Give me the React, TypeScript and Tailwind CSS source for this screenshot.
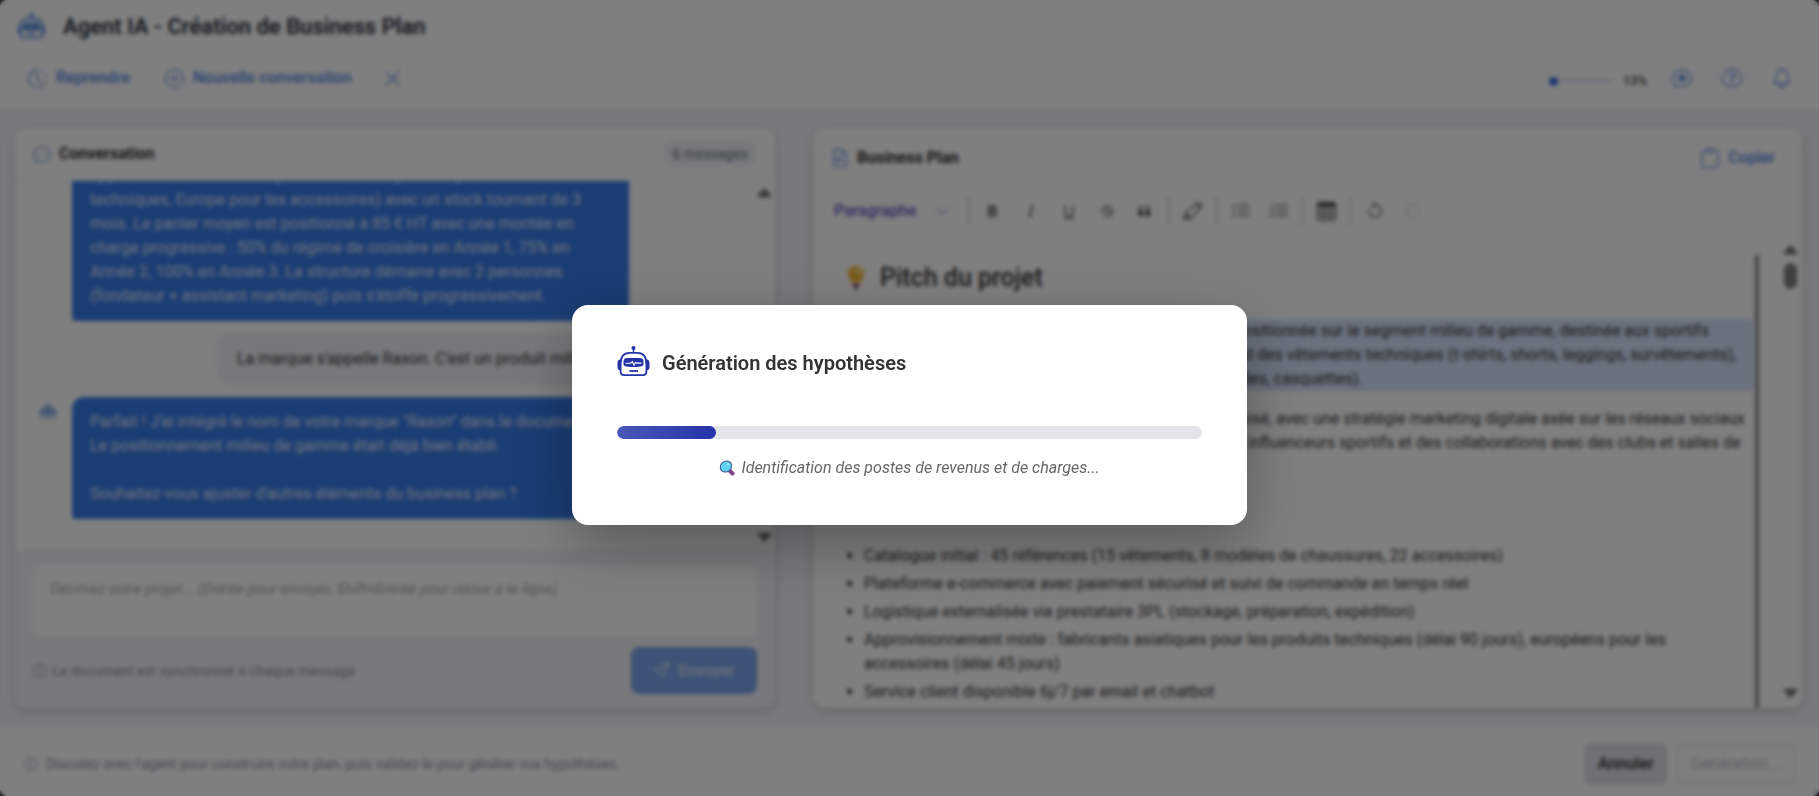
import React from "react";
import {
  BsClockHistory,
  BsPlusCircle,
  BsXLg,
  BsChatDots,
  BsChatHeart,
  BsQuestionCircle,
  BsBell,
  BsFileEarmarkText,
  BsClipboard,
  BsInfoCircle,
  BsSend,
  BsTypeBold,
  BsTypeItalic,
  BsTypeUnderline,
  BsTypeStrikethrough,
  BsQuote,
  BsHighlighter,
  BsListUl,
  BsListOl,
  BsTable,
  BsArrowCounterclockwise,
  BsArrowClockwise,
  BsChevronDown,
  BsRobot,
  BsCaretUpFill,
  BsCaretDownFill,
} from "react-icons/bs";

const PROGRESS = 17;

const RobotIcon = () => (
  <svg width="33" height="32" viewBox="0 0 33 32" fill="none" aria-hidden="true">
    <circle cx="16.5" cy="3" r="2.1" fill="#2533a8" />
    <path d="M16.5 4v4" stroke="#2533a8" strokeWidth="1.4" />
    <path
      d="M3.6 19C3.600 11.500 7 7.900 12.500 7.900h8c5.500 0 8.900 3.600 8.900 11.100v7.500c0 2.200-1.400 3.600-3.600 3.600H7.200c-2.200 0-3.600-1.400-3.600-3.600Z"
      stroke="#2533a8"
      strokeWidth="1.800"
    />
    <path d="M3.400 14.500v10.800C1.500 25.300 0.500 24 0.500 22v-4c0-2 1-3.500 2.900-3.500ZM29.600 14.500v10.800c1.900 0 2.900-1.300 2.900-3.300v-4c0-2-1-3.500-2.900-3.500Z" fill="#2533a8" />
    <path d="M6.500 16.500c0-2.500 1.500-3.500 4-3.500h12c2.500 0 4 1 4 3.500V19c0 2-1.500 3-10 3s-10-1-10-3Z" fill="#2533a8" />
    <path d="M8.500 18.300h5l2-1.600 1.500 3.400 1.700-2.600 1.300.6h4.500" stroke="#fff" strokeWidth="1.100" />
    <path d="M12.500 26h8.500" stroke="#2533a8" strokeWidth="1.800" />
  </svg>
);

const BulbIcon = () => (
  <svg width="18" height="26" viewBox="0 0 18 26" aria-hidden="true">
    <path d="M9 1c4.600 0 8 3.400 8 7.800 0 4.600-3.800 6-4.600 9.700H5.600C4.800 14.800 1 13.400 1 8.800 1 4.400 4.400 1 9 1Z" fill="#f5b52e" />
    <ellipse cx="11.500" cy="6" rx="3" ry="3.500" fill="#fde08a" />
    <path d="M6 18.500h6v3.500L9 25.500 6 22Z" fill="#8f5f86" />
  </svg>
);

const LensIcon = () => (
  <svg width="16" height="16" viewBox="0 0 16 16" aria-hidden="true">
    <path d="m10.500 10.500 3 3" stroke="#84458a" strokeWidth="4" strokeLinecap="round" />
    <ellipse cx="7" cy="6.500" rx="6" ry="5.300" transform="rotate(-40 7 6.500)" fill="#5fd0ee" stroke="#3f4f8c" strokeWidth="1" />
    <ellipse cx="9" cy="4.200" rx="1.500" ry="1" fill="#9be6f7" />
  </svg>
);

const toolbar = [
  [
    { label: "Gras", Icon: BsTypeBold, size: 18 },
    { label: "Italique", Icon: BsTypeItalic, size: 18 },
    { label: "Souligné", Icon: BsTypeUnderline, size: 18 },
    { label: "Barré", Icon: BsTypeStrikethrough, size: 18 },
    { label: "Citation", Icon: BsQuote, size: 19 },
  ],
  [{ label: "Surligner", Icon: BsHighlighter, size: 19 }],
  [
    { label: "Liste à puces", Icon: BsListUl, size: 20 },
    { label: "Liste numérotée", Icon: BsListOl, size: 20 },
  ],
  [{ label: "Tableau", Icon: BsTable, size: 19 }],
];

const points = [
  "Catalogue initial : 45 références (15 vêtements, 8 modèles de chaussures, 22 accessoires)",
  "Plateforme e-commerce avec paiement sécurisé et suivi de commande en temps réel",
  "Logistique externalisée via prestataire 3PL (stockage, préparation, expédition)",
  "Approvisionnement mixte : fabricants asiatiques pour les produits techniques (délai 90 jours), européens pour les accessoires (délai 45 jours)",
  "Service client disponible 6j/7 par email et chatbot",
];

const Header = () => (
  <header className="h-[108px] shrink-0 bg-white pr-5 pl-[18px]">
    <div className="flex h-[52px] items-center gap-[18px]">
      <BsRobot size={27} className="text-[#3b74d9]" />
      <h1 className="text-[22px] font-semibold text-[#212b36]">Agent IA - Création de Business Plan</h1>
    </div>
    <div className="flex h-[52px] items-center justify-between">
      <div className="flex items-center gap-[15px] text-base font-medium text-[#4f82e2]">
        <button className="flex h-[36px] items-center gap-[9px] rounded-md border border-[#e6edf9] px-[9px]">
          <BsClockHistory size={19} />
          Reprendre
        </button>
        <button className="flex h-[36px] items-center gap-[9px] rounded-md border border-[#e6edf9] px-[9px]">
          <BsPlusCircle size={19} />
          Nouvelle conversation
        </button>
        <button aria-label="Fermer" className="flex h-[36px] w-8 items-center justify-center rounded-md border border-[#e6edf9]">
          <BsXLg size={19} />
        </button>
      </div>
      <div className="flex items-center gap-4 text-[#4f82e2]">
        <div className="mr-0.5 flex items-center gap-2 pt-1.5">
          <div className="flex h-1 w-[66px] items-center rounded bg-[#e3e9f2]">
            <div className="size-[9px] rounded-full bg-[#2f6fe0]" />
          </div>
          <span className="text-[13px] font-medium text-[#333]">13%</span>
        </div>
        <button aria-label="Avis" className="flex size-[34px] items-center justify-center rounded-md border border-[#e6edf9]">
          <BsChatHeart size={20} />
        </button>
        <button aria-label="Aide" className="flex size-[34px] items-center justify-center rounded-md border border-[#e6edf9]">
          <BsQuestionCircle size={20} />
        </button>
        <button aria-label="Notifications" className="flex size-[34px] items-center justify-center rounded-md border border-[#e6edf9]">
          <BsBell size={20} />
        </button>
      </div>
    </div>
  </header>
);

const Conversation = () => (
  <section className="flex min-h-0 flex-col overflow-hidden rounded-xl bg-white shadow-[0_3px_10px_rgba(0,0,0,0.18)]">
    <div className="flex h-[53px] shrink-0 items-center justify-between border-b border-[#eceef1] pr-5 pl-[18px]">
      <h2 className="flex items-center gap-2 text-base font-bold text-[#2d2d2d]">
        <BsChatDots size={18} className="text-[#6b96e0]" />
        Conversation
      </h2>
      <span className="rounded-md bg-[#edf1f6] px-[7px] text-sm leading-6 font-medium text-[#7b8c9c]">6 messages</span>
    </div>
    <div className="flex min-h-0 flex-1">
      <div className="flex min-w-0 flex-1 flex-col justify-end gap-3 overflow-hidden pr-4 pb-[30px] pl-[18px] text-base leading-6">
        <div className="ml-[39px] w-[557px] rounded-xl rounded-bl bg-[#347ae8] px-[18px] py-[13px] text-[#e4ecfa]">
          approvisionnement mixte (fabrication Asie pour les produits<br />
          techniques, Europe pour les accessoires) avec un stock tournant de 3<br />
          mois. Le panier moyen est positionné à 85 € HT avec une montée en<br />
          charge progressive : 50% du régime de croisière en Année 1, 75% en<br />
          Année 2, 100% en Année 3. La structure démarre avec 2 personnes<br />
          (fondateur + assistant marketing) puis s'étoffe progressivement.
        </div>
        <div className="w-[520px] self-end rounded-xl bg-[#eef1f5] px-5 py-[14px] text-[#333]">
          La marque s'appelle Raxon. C'est un produit milieu de gamme.
        </div>
        <div className="flex items-start">
          <BsRobot size={16} className="mt-[6px] mr-[16px] ml-[7px] shrink-0 text-[#3b74d9]" />
          <div className="w-[557px] rounded-xl rounded-bl bg-[#347ae8] px-[18px] py-[13px] text-[#e4ecfa]">
            Parfait ! J'ai intégré le nom de votre marque "Raxon" dans le document.<br />
            Le positionnement milieu de gamme était déjà bien établi.<br />
            <br />
            Souhaitez-vous ajuster d'autres éléments du business plan ?
          </div>
        </div>
      </div>
      <div className="flex w-[22px] flex-col items-center justify-between py-0.5 text-[#707070]">
        <BsCaretUpFill size={19} />
        <BsCaretDownFill size={19} />
      </div>
    </div>
    <div className="shrink-0 bg-[#f1f3f6] px-[18px] pt-[17px] pb-[14px]">
      <textarea
        aria-label="Votre message"
        placeholder="Décrivez votre projet... (Entrée pour envoyer, Shift+Entrée pour retour à la ligne)"
        className="block h-[69px] w-full resize-none rounded-md bg-white px-[17px] py-[11px] text-[15px] leading-6 placeholder:text-[#a8a8a8] placeholder:italic"
      />
      <div className="mt-3 flex items-center justify-between">
        <p className="flex items-center gap-[5px] text-sm text-[#8795a3]">
          <BsInfoCircle size={14} />
          Le document est synchronisé à chaque message
        </p>
        <button className="flex h-[47px] items-center gap-2 rounded-lg bg-[#7ba4ec] px-[22px] text-base font-medium text-[#dbe7fb]">
          <BsSend size={17} />
          Envoyer
        </button>
      </div>
    </div>
  </section>
);

const BusinessPlan = () => (
  <section className="flex min-h-0 flex-col overflow-hidden rounded-xl bg-white shadow-[0_3px_10px_rgba(0,0,0,0.18)]">
    <div className="flex h-[60px] shrink-0 items-center justify-between border-b border-[#eceef1] pr-[18px] pl-[18px]">
      <h2 className="flex items-center gap-2 text-base font-bold text-[#2d2d2d]">
        <BsFileEarmarkText size={18} className="text-[#4a86ea]" />
        Business Plan
      </h2>
      <button className="flex h-[34px] items-center gap-2 rounded-md border border-[#e6edf9] px-2 text-base font-medium text-[#4f82e2]">
        <BsClipboard size={20} />
        Copier
      </button>
    </div>
    <div className="flex h-[47px] shrink-0 items-center gap-[9px] border-b border-[#eceef1] px-3 text-[#444]">
      <button className="flex h-8 w-[134px] items-center justify-between rounded-md border border-[#ecf0f8] px-2 text-base font-medium text-[#5a58c0]">
        Paragraphe
        <BsChevronDown size={15} className="text-[#6c94e0]" />
      </button>
      <span className="h-7 w-px bg-[#a8b2c4]" />
      {toolbar.map((group, i) => (
        <React.Fragment key={i}>
          {group.map(({ label, Icon, size }) => (
            <button key={label} aria-label={label} className="flex size-[29px] items-center justify-center">
              <Icon size={size} />
            </button>
          ))}
          <span className="h-7 w-px bg-[#a8b2c4]" />
        </React.Fragment>
      ))}
      <button aria-label="Annuler la frappe" className="flex size-[29px] items-center justify-center">
        <BsArrowCounterclockwise size={18} />
      </button>
      <button aria-label="Rétablir" className="flex size-[29px] items-center justify-center text-[#d4d7db]">
        <BsArrowClockwise size={18} />
      </button>
    </div>
    <div className="flex min-h-0 flex-1">
      <div className="mt-5 ml-[34px] min-w-0 flex-1 overflow-hidden border-r-4 border-[#8a8a8a] pr-0.5 text-base leading-6 text-[#333]">
        <h3 className="mb-[18px] flex items-center gap-[15px] text-[25px] leading-[46px] font-medium">
          <BulbIcon />
          Pitch du projet
        </h3>
        <p className="mb-4 rounded bg-[#d5e4fb]">
          Raxon est une marque e-commerce d'articles de sport positionnée sur le segment milieu de gamme, destinée aux sportifs<br />
          amateurs et passionnés confirmés. La gamme comprend des vêtements techniques (t-shirts, shorts, leggings, survêtements),<br />
          des chaussures et des accessoires (sacs de sport, gourdes, casquettes).
        </p>
        <p>
          Le site propose un parcours client ergonomique et optimisé, avec une stratégie marketing digitale axée sur les réseaux sociaux<br />
          (Instagram, TikTok, YouTube), des partenariats avec des influenceurs sportifs et des collaborations avec des clubs et salles de<br />
          sport.
        </p>
        <h3 className="mt-3 mb-[17px] text-xl leading-9 font-medium">Offre et organisation</h3>
        <ul className="list-disc pl-[17px]">
          {points.map((p) => (
            <li key={p} className="mb-1">{p}</li>
          ))}
        </ul>
      </div>
      <div className="mr-px ml-5 flex w-[22px] flex-col items-center py-[5px] text-[#707070]">
        <BsCaretUpFill size={19} />
        <span className="mt-1 h-[26px] w-[13px] rounded-full bg-[#808080]" />
        <BsCaretDownFill size={19} className="mt-auto" />
      </div>
    </div>
  </section>
);

const Footer = () => (
  <footer className="flex h-[69px] shrink-0 items-center justify-between bg-white px-6 pt-1">
    <p className="flex items-center gap-2 text-sm text-[#8795a3]">
      <BsInfoCircle size={14} />
      Discutez avec l'agent pour construire votre plan, puis validez-le pour générer vos hypothèses.
    </p>
    <div className="flex gap-[10px]">
      <button className="h-10 rounded-md border border-[#cdd2da] bg-[#dde1e8] px-3 text-base font-semibold text-[#333]">Annuler</button>
      <button className="h-10 rounded-md border border-[#cfd2d6] px-[13px] text-base text-[#b8bcc2]">Génération...</button>
    </div>
  </footer>
);

const GenerationDialog = () => (
  <div className="fixed inset-0 flex items-center justify-center bg-black/50 pt-[34px] backdrop-blur-[2px]">
    <div role="dialog" aria-labelledby="dialog-title" className="h-[220px] w-[675px] rounded-2xl bg-white px-[45px] pt-10 shadow-[0_20px_60px_rgba(0,0,0,0.3)]">
      <div className="flex h-8 items-center gap-3">
        <RobotIcon />
        <h2 id="dialog-title" className="pt-1 text-xl font-semibold text-[#333]">Génération des hypothèses</h2>
      </div>
      <div className="mt-[49px] h-[13px] overflow-hidden rounded-full bg-[#e2e6eb]">
        <div className="h-full rounded-full bg-linear-to-r from-[#4a57b8] to-[#2533a8]" style={{ width: PROGRESS + "%" }} />
      </div>
      <p className="mt-[17px] flex items-center justify-center gap-[6px] text-base text-[#666] italic">
        <LensIcon />
        Identification des postes de revenus et de charges...
      </p>
    </div>
  </div>
);

const App = () => {
  return (
    <div className="bg-[#3a4048] font-[Roboto,sans-serif]">
      <div className="flex h-screen flex-col overflow-hidden rounded-lg bg-[#f1f3f6]">
        <Header />
        <main className="grid min-h-0 flex-1 grid-cols-[760fr_989fr] gap-[38px] pt-5 pr-[17px] pb-[19px] pl-[15px]">
          <Conversation />
          <BusinessPlan />
        </main>
        <Footer />
      </div>
      <GenerationDialog />
    </div>
  );
};

export default App;
